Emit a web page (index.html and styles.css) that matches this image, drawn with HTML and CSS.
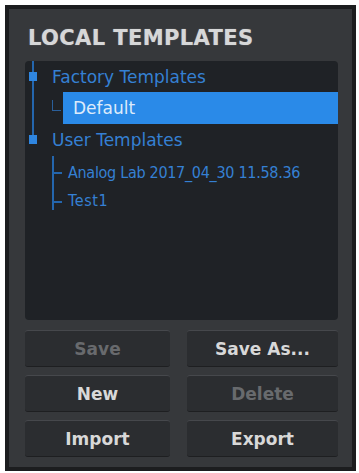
FILE: index.html
```html
<!DOCTYPE html>
<html>
<head>
<meta charset="utf-8">
<link rel="stylesheet" href="styles.css">
</head>
<body>
<div class="panel">
  <h1 class="title">LOCAL TEMPLATES</h1>
  <div class="tree">
    <div class="trunk"></div>
    <div class="row node"><span class="bullet"></span><span>Factory Templates</span></div>
    <div class="row leaf-sel"><span class="elbow"></span><div class="sel">Default</div></div>
    <div class="row node"><span class="bullet"></span><span>User Templates</span></div>
    <div class="subgroup">
      <div class="row sub"><span class="tick"></span><span class="cond">Analog Lab 2017_04_30 11.58.36</span></div>
      <div class="row sub last"><span class="tick"></span><span class="cond test">Test1</span></div>
    </div>
  </div>
  <div class="buttons">
    <div class="btn disabled">Save</div>
    <div class="btn">Save As...</div>
    <div class="btn">New</div>
    <div class="btn disabled">Delete</div>
    <div class="btn">Import</div>
    <div class="btn">Export</div>
  </div>
</div>
</body>
</html>
```
FILE: styles.css
```css
html, body {
  margin: 0;
  padding: 0;
  background: #ffffff;
}
body {
  padding: 5px 3px 2px 5px;
}
.panel {
  width: 313px;
  height: 458px;
  background: #36383b;
  border: 4px solid #1c1d1f;
  padding: 0 14px 0 16px;
  display: flex;
  flex-direction: column;
  font-family: "DejaVu Sans", sans-serif;
}
.title {
  margin: 0;
  padding: 17px 0 0 3px;
  height: 35px;
  font-size: 21px;
  font-weight: bold;
  color: #d6d7d8;
  line-height: 24px;
  letter-spacing: 0.4px;
  text-shadow: 0 0 1px rgba(214, 215, 216, 0.6);
}
.tree {
  position: relative;
  height: 259px;
  background: #1f2226;
  border-radius: 4px;
  color: #3580d3;
  font-size: 17px;
}
.trunk {
  position: absolute;
  left: 7px;
  top: 0;
  width: 2px;
  height: 76px;
  background: #2466ad;
}
.row {
  height: 31px;
  display: flex;
  align-items: center;
  white-space: nowrap;
}
.node {
  padding-left: 4px;
}
.bullet {
  width: 8px;
  height: 9px;
  background: #2f86e0;
  margin-right: 15px;
  position: relative;
}
.leaf-sel {
  padding-left: 27px;
  height: 32px;
}
.elbow {
  width: 8px;
  height: 10px;
  border-left: 1px solid #2a5f9a;
  border-bottom: 1px solid #2a5f9a;
  margin-right: 2px;
  align-self: flex-start;
  margin-top: 8px;
}
.sel {
  flex: 1;
  height: 32px;
  background: #2a8ae8;
  color: #dcebfb;
  padding-left: 10px;
  display: flex;
  align-items: center;
}
.subgroup {
  margin-left: 27px;
  border-left: 2px solid #2466ad;
  height: 50px;
  margin-top: 1px;
  padding-top: 4px;
  display: flex;
  flex-direction: column;
}
.sub {
  height: 30px;
}
.sub.last {
  height: 28px;
  align-items: flex-end;
}
.sub.last .tick {
  margin-bottom: 7px;
}
.tick {
  width: 8px;
  height: 2px;
  background: #2466ad;
  margin-right: 6px;
}
.cond {
  font-family: "DejaVu Sans Condensed", "DejaVu Sans", sans-serif;
  font-stretch: condensed;
  font-size: 16px;
  letter-spacing: -0.3px;
}
.cond.test {
  letter-spacing: 0.6px;
}
.buttons {
  margin-top: 10px;
  display: grid;
  grid-template-columns: 145px 151px;
  column-gap: 17px;
  row-gap: 8px;
  grid-auto-rows: 37px;
}
.btn {
  background: #2b2d30;
  border-top: 1px solid #46484c;
  border-bottom: 1px solid #1e1f21;
  border-radius: 3px;
  box-sizing: border-box;
  display: flex;
  align-items: center;
  justify-content: center;
  font-size: 17px;
  font-weight: bold;
  color: #d8d8d8;
}
.btn.disabled {
  color: #686a6d;
}
```
